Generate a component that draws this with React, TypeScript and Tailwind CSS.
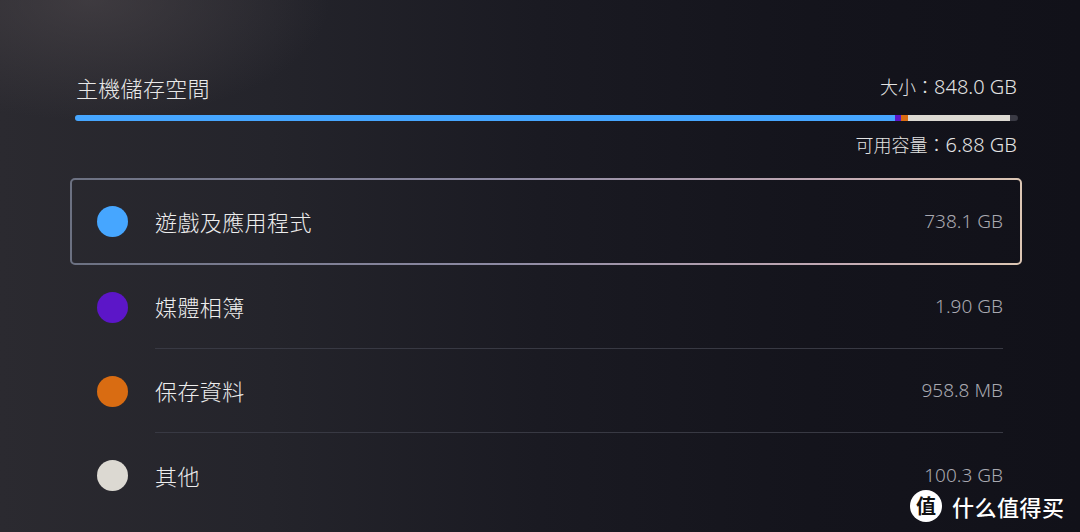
import React from "react";

type Item = { label: string; value: string; color: string };

const items: Item[] = [
  { label: "遊戲及應用程式", value: "738.1 GB", color: "#46a6ff" },
  { label: "媒體相簿", value: "1.90 GB", color: "#5c16c8" },
  { label: "保存資料", value: "958.8 MB", color: "#d96c12" },
  { label: "其他", value: "100.3 GB", color: "#dcd9d2" },
];

const cjk = "font-['Noto_Sans_CJK_TC','Noto_Sans',sans-serif]";
const num = "font-['Noto_Sans','Noto_Sans_CJK_TC',sans-serif]";

function FocusRing() {
  return (
    <svg className="pointer-events-none absolute inset-0 h-full w-full" preserveAspectRatio="none">
      <defs>
        <linearGradient id="ring" x1="0" y1="0" x2="1" y2="0">
          <stop offset="0" stopColor="#6c7182" />
          <stop offset="0.45" stopColor="#8d8aa3" />
          <stop offset="0.8" stopColor="#c2a9b4" />
          <stop offset="1" stopColor="#dcc6b4" />
        </linearGradient>
      </defs>
      <rect x="1" y="1" width="calc(100% - 2px)" height="calc(100% - 2px)" rx="4" ry="4" fill="none" stroke="url(#ring)" strokeWidth="2" />
    </svg>
  );
}

function Row({ item, selected, divider }: { item: Item; selected?: boolean; divider?: boolean }) {
  return (
    <div className={`relative flex items-center pl-[27px] pr-[19px] ${selected ? "h-[87px]" : "h-[84px]"}`}>
      {selected && <FocusRing />}
      <div className="h-[31px] w-[31px] shrink-0 rounded-full" style={{ backgroundColor: item.color }} />
      <div className={`ml-[27px] flex h-full flex-1 items-center justify-between ${divider ? "border-b border-[#383943]" : ""}`}>
        <span className={`${cjk} text-[22px] font-light tracking-[0.4px] text-[#ededed]`}>{item.label}</span>
        <span className={`${num} text-[19px] font-light text-[#a9a9b1]`}>{item.value}</span>
      </div>
    </div>
  );
}

export default function App() {
  return (
    <div className="relative h-[532px] w-[1080px] overflow-hidden bg-[linear-gradient(90deg,#2b2a30_0%,#24242b_25%,#1a1a22_50%,#14141c_75%,#111119_100%)]">
      <div className="pointer-events-none absolute inset-0 bg-[radial-gradient(ellipse_240px_120px_at_90px_0px,rgba(80,74,78,0.55),transparent)]" />

      <div className="relative pt-[72px]">
        {/* header */}
        <div className="flex items-end justify-between pl-[76px] pr-[63px]">
          <span className={`${cjk} text-[22px] font-light leading-[28px] tracking-[0.3px] text-[#e8e8e8]`}>主機儲存空間</span>
          <span className={`${num} text-[20px] font-light leading-[28px] text-[#e4e4e4]`}>
            <span className={`${cjk} text-[18px]`}>大小：</span>848.0 GB
          </span>
        </div>

        {/* usage bar */}
        <div className="mr-[62px] ml-[75px] mt-[14px] flex h-[6px] overflow-hidden rounded-full bg-[#3a3a44]">
          <div className="w-[820px] bg-[#46a6ff]" />
          <div className="w-[6px] bg-[#5c16c8]" />
          <div className="w-[7px] bg-[#d96c12]" />
          <div className="w-[102px] bg-[#dcd9d2]" />
        </div>

        <div className="mt-[11px] flex justify-end pr-[63px]">
          <span className={`${num} text-[20px] font-light leading-[24px] text-[#e4e4e4]`}>
            <span className={`${cjk} text-[18px]`}>可用容量：</span>6.88 GB
          </span>
        </div>

        {/* category list */}
        <div className="ml-[70px] mt-[21px] w-[952px]">
          <Row item={items[0]} selected />
          <Row item={items[1]} divider />
          <Row item={items[2]} divider />
          <Row item={items[3]} />
        </div>
      </div>

      {/* corner badge */}
      <div className="absolute bottom-[10px] left-[910px] flex items-center gap-[10px]">
        <div className="flex h-[32px] w-[32px] items-center justify-center rounded-full bg-white">
          <span className="font-['Noto_Sans_CJK_SC',sans-serif] text-[20px] font-bold leading-none text-[#111]">值</span>
        </div>
        <span className="font-['Noto_Sans_CJK_SC',sans-serif] text-[22px] font-medium leading-none tracking-[0.5px] text-white">什么值得买</span>
      </div>
    </div>
  );
}
